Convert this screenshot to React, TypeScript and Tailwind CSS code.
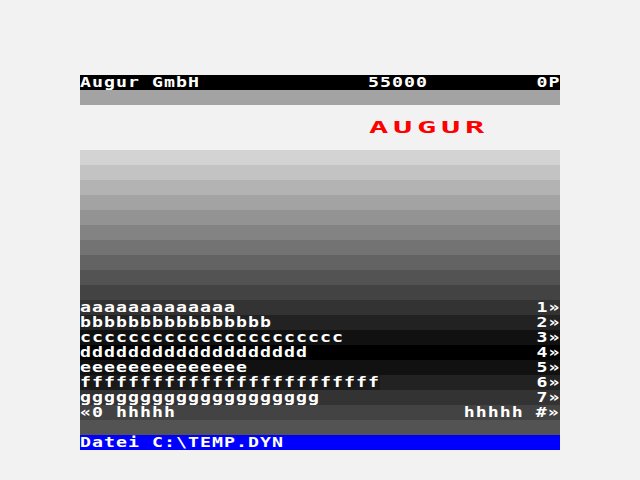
import React from "react";

const T = ({ text, right = false }: { text: string; right?: boolean }) => (
  <span
    className={`block leading-[14px] tracking-[0.8px] scale-x-130 ${right ? "origin-right" : "origin-left"}`}
  >
    {text.replace(/ /g, "\u00a0")}
  </span>
);

const Row = ({ bg, children }: { bg: string; children?: React.ReactNode }) => (
  <div className={`h-[15px] flex items-start leading-[14px] whitespace-nowrap ${bg}`}>{children}</div>
);

export default function App() {
  const lines: [string, string, string][] = [
    ["aaaaaaaaaaaaa", "1»", "bg-[#333333]"],
    ["bbbbbbbbbbbbbbbb", "2»", "bg-[#222222]"],
    ["cccccccccccccccccccccc", "3»", "bg-[#111111]"],
    ["ddddddddddddddddddd", "4»", "bg-[#000000]"],
    ["eeeeeeeeeeeeee", "5»", "bg-[#111111]"],
    ["fffffffffffffffffffffffff", "6»", "bg-[#222222]"],
    ["gggggggggggggggggggg", "7»", "bg-[#333333]"],
  ];
  const bands = [
    "bg-[#d3d3d3]",
    "bg-[#c3c3c3]",
    "bg-[#b3b3b3]",
    "bg-[#a3a3a3]",
    "bg-[#939393]",
    "bg-[#838383]",
    "bg-[#737373]",
    "bg-[#636363]",
    "bg-[#535353]",
    "bg-[#434343]",
  ];
  return (
    <div className="w-[640px] h-[480px] bg-[#f2f2f2] pt-[75px] font-['DejaVu_Sans_Mono',monospace] font-bold text-[14px] text-white">
      <div className="w-[480px] mx-auto">
        <Row bg="bg-black">
          <div className="w-[288px]">
            <T text="Augur GmbH" />
          </div>
          <div>
            <T text="55000" />
          </div>
          <div className="ml-auto">
            <T text="0P" right />
          </div>
        </Row>
        <Row bg="bg-[#a3a3a3]" />
        <Row bg="bg-[#f2f2f2]" />
        <Row bg="bg-[#f2f2f2]">
          <div className="pl-[289px] text-[#ff0000] text-[16px] leading-[15px]">
            <span className="block leading-[15px] tracking-[2.37px] scale-x-200 origin-left">AUGUR</span>
          </div>
        </Row>
        <Row bg="bg-[#f2f2f2]" />
        {bands.map((b, i) => (
          <Row key={i} bg={b} />
        ))}
        {lines.map(([t, n, bg], i) => (
          <Row key={i} bg={bg}>
            <div className={i === 5 ? "bg-[#1a1a1a] w-[300px] h-[15px]" : ""}>
              <T text={t} />
            </div>
            <div className="ml-auto">
              <T text={n} right />
            </div>
          </Row>
        ))}
        <Row bg="bg-[#434343]">
          <div>
            <T text="«0 hhhhh" />
          </div>
          <div className="ml-auto">
            <T text="hhhhh #»" right />
          </div>
        </Row>
        <Row bg="bg-[#535353]" />
        <Row bg="bg-[#0000ff]">
          <div>
            <T text="Datei C:\TEMP.DYN" />
          </div>
        </Row>
      </div>
    </div>
  );
}
